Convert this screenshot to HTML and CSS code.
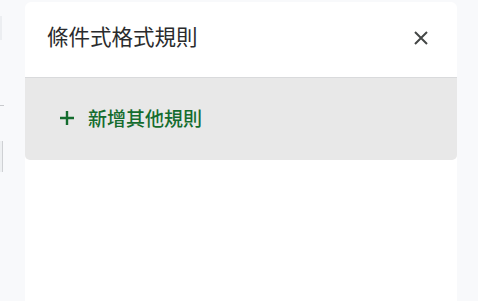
FILE: index.html
```html
<!DOCTYPE html>
<html lang="zh-Hant">
<head>
<meta charset="utf-8">
<link rel="stylesheet" href="styles.css">
</head>
<body>
<div class="page">
  <div class="side">
    <div class="side-chip"></div>
    <div class="side-line"></div>
    <div class="side-box"></div>
  </div>
  <div class="panel">
    <div class="header">
      <h1 class="title">條件式格式規則</h1>
      <button class="close" aria-label="關閉">
        <svg width="16" height="16" viewBox="0 0 16 16"><path d="M2 2 L14 14 M14 2 L2 14" stroke="#444746" stroke-width="2" fill="none"/></svg>
      </button>
    </div>
    <div class="add-rule">
      <span class="plus">
        <svg width="14" height="14" viewBox="0 0 14 14"><path d="M7 0 V14 M0 7 H14" stroke="#146c2e" stroke-width="2.4" fill="none"/></svg>
      </span>
      <span class="add-label">新增其他規則</span>
    </div>
  </div>
</div>
</body>
</html>
```
FILE: styles.css
```css
html, body {
  margin: 0;
  padding: 0;
  height: 100%;
}
body {
  background: #f8f9fb;
  font-family: "Noto Sans CJK TC", "Noto Sans", sans-serif;
  overflow: hidden;
}
.page {
  display: flex;
  height: 100%;
  padding-top: 2px;
  box-sizing: border-box;
}
.side {
  width: 25px;
  position: relative;
  flex: none;
}
.side-chip {
  position: absolute;
  left: 0;
  top: 14px;
  width: 2px;
  height: 24px;
  background: #eceef1;
}
.side-line {
  position: absolute;
  left: 0;
  top: 103px;
  width: 4px;
  height: 1px;
  background: #c8cacd;
}
.side-box {
  position: absolute;
  left: 0;
  top: 139px;
  width: 2px;
  height: 31px;
  border-right: 1px solid #cfd1d4;
  background: #eef0f2;
}
.panel {
  width: 432px;
  flex: none;
  background: #fff;
  border-radius: 6px 6px 0 0;
  display: flex;
  flex-direction: column;
}
.header {
  height: 75px;
  display: flex;
  align-items: center;
  justify-content: space-between;
  padding: 0 28px 0 22px;
  border-bottom: 1px solid #d9dadc;
}
.title {
  margin: 0 0 7px;
  font-size: 21.5px;
  font-weight: 400;
  color: #2a2b2d;
  line-height: 1;
}
.close {
  border: 0;
  background: none;
  padding: 0;
  width: 16px;
  height: 16px;
  display: flex;
  margin-bottom: 3px;
}
.add-rule {
  height: 82px;
  box-sizing: border-box;
  padding-bottom: 4px;
  background: #e8e8e8;
  border-radius: 0 0 5px 5px;
  display: flex;
  align-items: center;
  padding-left: 35px;
  gap: 14px;
}
.plus {
  display: flex;
  width: 14px;
  height: 14px;
  margin-top: 2px;
}
.add-label {
  font-size: 19px;
  font-weight: 500;
  color: #146c2e;
  line-height: 1;
}
```
